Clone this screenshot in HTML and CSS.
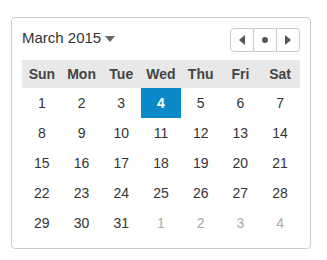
FILE: index.html
```html
<!DOCTYPE html>
<html lang="en">
<head>
  <meta charset="UTF-8">
  <title>Date Picker</title>
  <link rel="stylesheet" href="styles.css">
</head>
<body>
  <div class="picker">
    <div class="picker-head">
      <div class="month-label">March 2015 <span class="caret"></span></div>
      <div class="nav-group">
        <button class="nav-btn"><span class="arrow-left"></span></button>
        <button class="nav-btn"><span class="dot"></span></button>
        <button class="nav-btn"><span class="arrow-right"></span></button>
      </div>
    </div>

    <table class="days">
      <thead>
        <tr><th>Sun</th><th>Mon</th><th>Tue</th><th>Wed</th><th>Thu</th><th>Fri</th><th>Sat</th></tr>
      </thead>
      <tbody>
        <tr><td>1</td><td>2</td><td>3</td><td class="selected">4</td><td>5</td><td>6</td><td>7</td></tr>
        <tr><td>8</td><td>9</td><td>10</td><td>11</td><td>12</td><td>13</td><td>14</td></tr>
        <tr><td>15</td><td>16</td><td>17</td><td>18</td><td>19</td><td>20</td><td>21</td></tr>
        <tr><td>22</td><td>23</td><td>24</td><td>25</td><td>26</td><td>27</td><td>28</td></tr>
        <tr><td>29</td><td>30</td><td>31</td><td class="other">1</td><td class="other">2</td><td class="other">3</td><td class="other">4</td></tr>
      </tbody>
    </table>
  </div>
</body>
</html>
```

FILE: styles.css
```css
body {
  margin: 0;
  padding: 17px 0 0 11px;
  font-family: "Liberation Sans", Arial, sans-serif;
  color: #333;
  background: #fff;
}

.picker {
  width: 278px;
  padding: 10px;
  border: 1px solid #ccc;
  border-radius: 4px;
}

.picker-head {
  display: flex;
  justify-content: space-between;
  align-items: center;
  height: 24px;
  margin-bottom: 8px;
}

.month-label {
  font-size: 15px;
  display: flex;
  align-items: center;
  gap: 4px;
  margin-top: -5px;
}

.caret {
  width: 0;
  height: 0;
  border-left: 5px solid transparent;
  border-right: 5px solid transparent;
  border-top: 6px solid #666;
  margin-top: 2px;
}

.nav-group {
  display: flex;
  height: 24px;
}

.nav-btn {
  width: 23px;
  height: 24px;
  padding: 0;
  background: #fff;
  border: 1px solid #ccc;
  border-left: none;
  display: flex;
  justify-content: center;
  align-items: center;
}

.nav-btn:first-child {
  border-left: 1px solid #ccc;
  border-radius: 4px 0 0 4px;
  width: 24px;
}

.nav-btn:last-child {
  border-radius: 0 4px 4px 0;
}

.arrow-left {
  border-top: 5px solid transparent;
  border-bottom: 5px solid transparent;
  border-right: 6px solid #555;
}

.arrow-right {
  border-top: 5px solid transparent;
  border-bottom: 5px solid transparent;
  border-left: 6px solid #555;
}

.dot {
  width: 6px;
  height: 6px;
  border-radius: 50%;
  background: #555;
}

.days {
  width: 100%;
  border-collapse: collapse;
  table-layout: fixed;
  font-size: 14px;
}

.days th {
  background: #e8e8e8;
  height: 28px;
  padding: 0;
  font-weight: bold;
  color: #444;
}

.days td {
  height: 30px;
  padding: 0;
  text-align: center;
}

.days td.selected {
  background: #0a88c8;
  color: #fff;
  font-weight: bold;
}

.days td.other {
  color: #aaa;
}
```
